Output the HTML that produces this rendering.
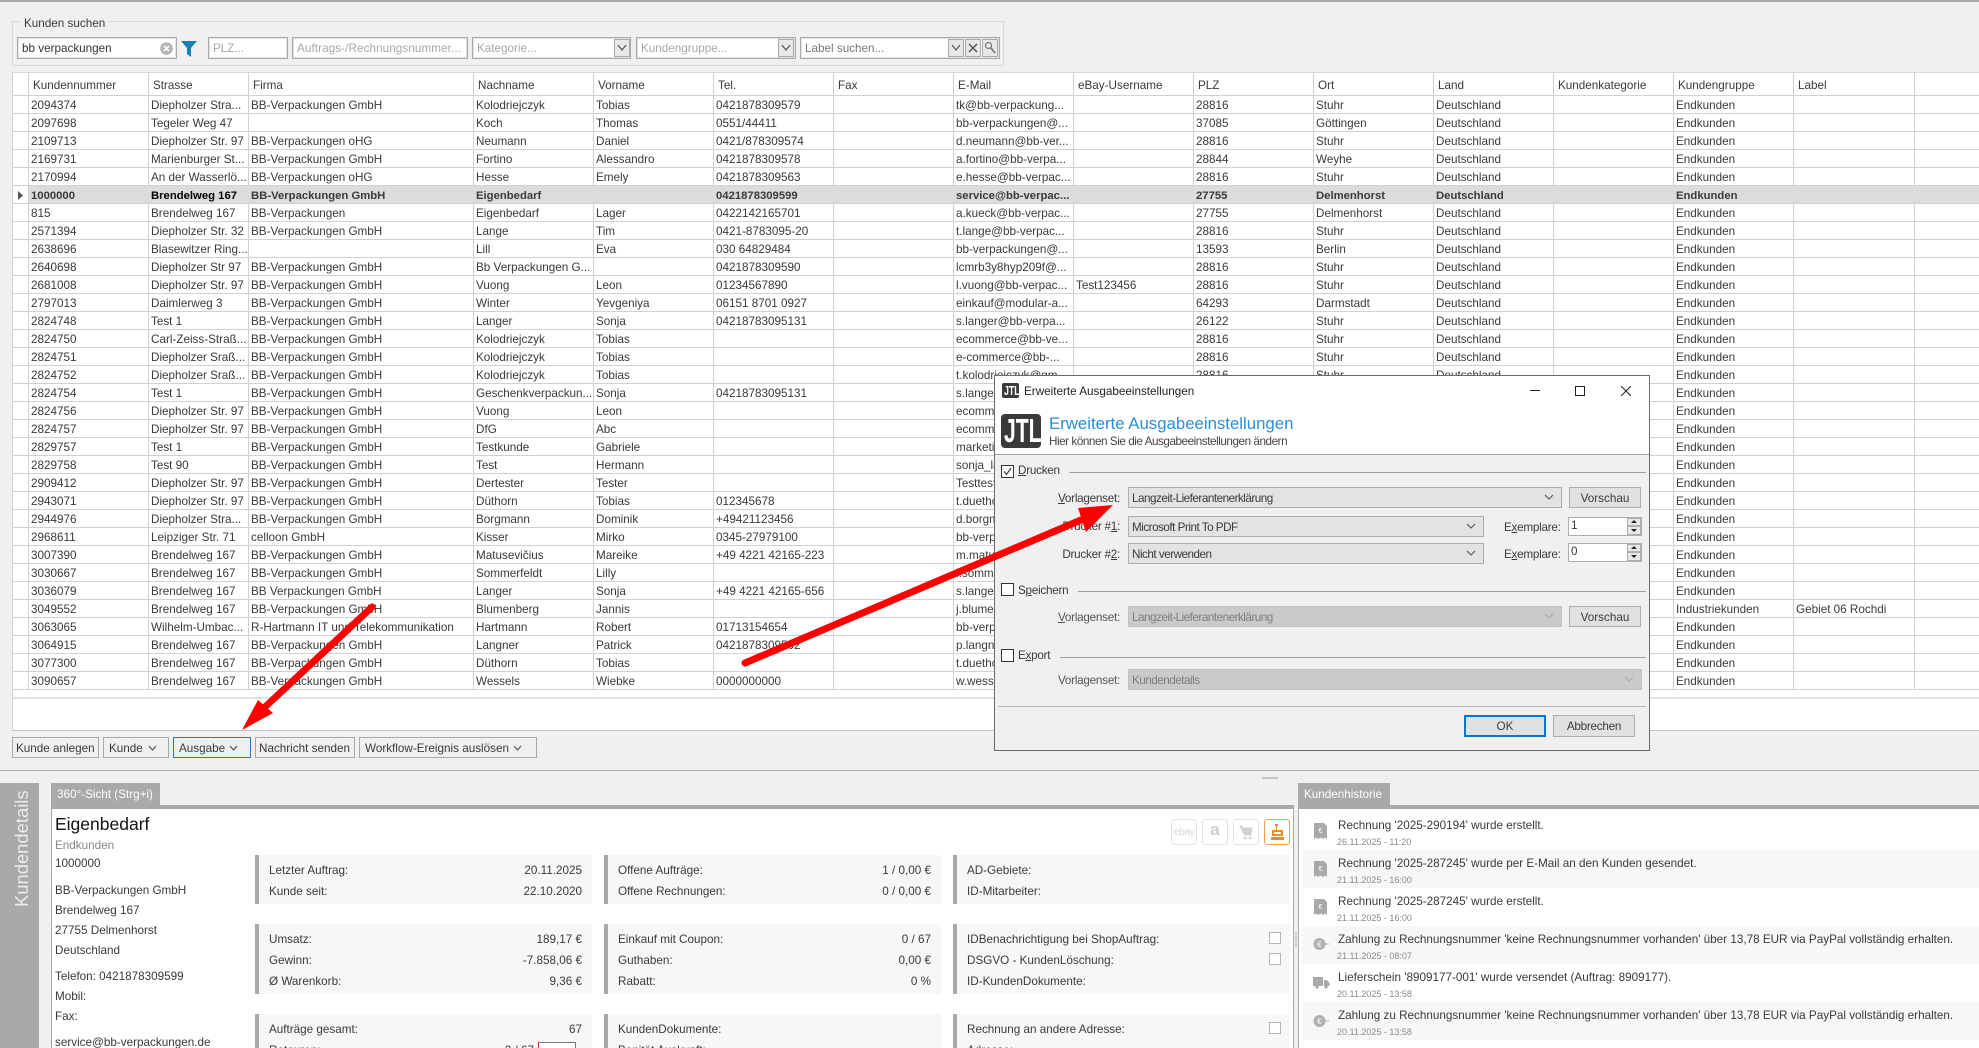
<!DOCTYPE html>
<html lang="de"><head><meta charset="utf-8"><title>Kunden</title>
<style>
html,body{margin:0;padding:0}
html{width:1979px;height:1048px;overflow:hidden}
body{width:1979px;height:1048px;position:relative;overflow:hidden;background:#f0f0f0;font:11.7px/18px "Liberation Sans",sans-serif;color:#3a3a3a}
.a{position:absolute;box-sizing:border-box}
.t{position:absolute;white-space:nowrap;line-height:18px}
.in{position:absolute;box-sizing:border-box;background:#fff;border:1px solid #a9a9a9;box-shadow:inset 0 0 0 1px #e4e4e4;height:22px;top:37px;color:#a8a8a8;line-height:21px;padding-left:4px;white-space:nowrap;overflow:hidden}
.mb{position:absolute;box-sizing:border-box;border:1px solid #a9a9a9;background:#e8e8e8;width:16px;height:18px;top:39px}
#g{position:absolute;left:13px;top:72px;width:1966px;table-layout:fixed;border-collapse:separate;border-spacing:0;background:#fff;font-size:11.7px}
#g td{height:18px;box-sizing:border-box;padding:3px 0 0 2px;border-right:1px solid #cdd2d9;border-bottom:1px solid #cdd2d9;white-space:nowrap;overflow:hidden;line-height:14px}
#g tr.h td{height:24px;padding-left:4px;border-top:1px solid #d9d9d9;border-bottom:1px solid #cdd2d9;padding-top:4px;line-height:16px}
#g tr.s td{background:#dcdcdc;font-weight:bold;font-size:11.3px;border-right-color:#dcdcdc}
#g tr.s td:first-child{background:#fff;border-right-color:#cdd2d9}
#g td:last-child{border-right:0}
.btn{position:absolute;box-sizing:border-box;top:737px;height:21px;background:#f0f0f0;border:1px solid #a9a9a9;line-height:21px;padding-left:3px;white-space:nowrap}
.card{position:absolute;box-sizing:border-box;background:#f7f7f7;border-left:4px solid #a9a9a9}
.r{position:absolute;white-space:nowrap;line-height:18px;text-align:right}
.cb{position:absolute;box-sizing:border-box;width:12px;height:12px;background:#fff;border:1px solid #b5b5b5}
.ib{position:absolute;box-sizing:border-box;top:819px;width:26px;height:26px;background:#fff;border:1px solid #e2e2e2;border-radius:3px}
.hi{position:absolute;left:1302px;right:0;height:38px}
.d{font-size:9px;color:#8a8a8a}
.c{position:absolute;box-sizing:border-box;background:#e3e3e3;border:1px solid #acacac;height:21px;line-height:21px;padding-left:3px;white-space:nowrap;left:1128px;letter-spacing:-.5px}
.c.dis{background:#cacaca;border-color:#c0c0c0;color:#7d7d7d}
.c svg{position:absolute;right:7px;top:6px}
.vb{position:absolute;box-sizing:border-box;background:#e1e1e1;border:1px solid #adadad;left:1569px;width:72px;height:21px;text-align:center;line-height:21px}
.dcb{position:absolute;box-sizing:border-box;left:1001px;width:13px;height:13px;background:#fff;border:1px solid #333}
.ln{position:absolute;height:1px;background:#a0a0a0;right:333px}
.sp{position:absolute;box-sizing:border-box;left:1568px;width:74px;height:19px;background:#fff;border:1px solid #abadb3;padding-left:2px;line-height:15px}
.sb{position:absolute;box-sizing:border-box;right:0;width:14px;height:8px;background:#e8e8e8;border:1px solid #adadad}
.dl{letter-spacing:-.25px}
</style></head><body>

<div class="a" style="left:0;top:0;width:1979px;height:2px;background:#a9a9a9"></div>

<!-- search group -->
<div class="a" style="left:12px;top:21px;width:992px;height:45px;border:1px solid #d9d9d9"></div>
<div class="t" style="left:20px;top:15px;padding:0 4px;background:#f0f0f0;font-size:11.7px">Kunden suchen</div>
<div class="in" style="left:17px;width:160px;color:#333">bb verpackungen</div>
<svg class="a" style="left:160px;top:42px" width="13" height="13" viewBox="0 0 13 13"><circle cx="6.5" cy="6.5" r="6.3" fill="#b4b4b4"/><path d="M4 4l5 5M9 4l-5 5" stroke="#fff" stroke-width="1.6"/></svg>
<svg class="a" style="left:181px;top:41px" width="16" height="16" viewBox="0 0 16 16"><path d="M0 0H16L10 7V16L6 13V7Z" fill="#1d7fb4"/></svg>
<div class="in" style="left:208px;width:80px">PLZ...</div>
<div class="in" style="left:292px;width:176px;letter-spacing:.08px">Auftrags-/Rechnungsnummer...</div>
<div class="in" style="left:472px;width:159px">Kategorie...</div>
<div class="mb" style="left:614px"><svg width="14" height="16"><path d="M3 5l4 5 4-5" fill="none" stroke="#555" stroke-width="1.2"/></svg></div>
<div class="in" style="left:636px;width:160px">Kundengruppe...</div>
<div class="mb" style="left:778px"><svg width="14" height="16"><path d="M3 5l4 5 4-5" fill="none" stroke="#555" stroke-width="1.2"/></svg></div>
<div class="in" style="left:800px;width:200px;color:#777">Label suchen...</div>
<div class="mb" style="left:948px"><svg width="14" height="16"><path d="M3 5l4 5 4-5" fill="none" stroke="#555" stroke-width="1.2"/></svg></div>
<div class="mb" style="left:965px"><svg width="14" height="16"><path d="M3 4l8 8M11 4l-8 8" fill="none" stroke="#555" stroke-width="1.4"/></svg></div>
<div class="mb" style="left:982px"><svg width="14" height="16"><circle cx="5.5" cy="5.5" r="3" fill="none" stroke="#777" stroke-width="1.2"/><path d="M8 8l4 5" stroke="#777" stroke-width="1.8"/></svg></div>

<!-- grid -->
<div class="a" style="left:12px;top:72px;width:1967px;height:659px;background:#fff;border-left:1px solid #d0d0d0;border-bottom:1px solid #c4c4c4"></div>
<table id="g">
<colgroup><col style="width:16px"><col style="width:120px"><col style="width:100px"><col style="width:225px"><col style="width:120px"><col style="width:120px"><col style="width:120px"><col style="width:120px"><col style="width:120px"><col style="width:120px"><col style="width:120px"><col style="width:120px"><col style="width:120px"><col style="width:120px"><col style="width:120px"><col style="width:121px"><col style="width:64px"></colgroup>
<tr class="h"><td></td><td>Kundennummer</td><td>Strasse</td><td>Firma</td><td>Nachname</td><td>Vorname</td><td>Tel.</td><td>Fax</td><td>E-Mail</td><td>eBay-Username</td><td>PLZ</td><td>Ort</td><td>Land</td><td>Kundenkategorie</td><td>Kundengruppe</td><td>Label</td><td></td></tr>
<tr><td></td><td>2094374</td><td>Diepholzer Stra...</td><td>BB-Verpackungen GmbH</td><td>Kolodriejczyk</td><td>Tobias</td><td>0421878309579</td><td></td><td>tk@bb-verpackung...</td><td></td><td>28816</td><td>Stuhr</td><td>Deutschland</td><td></td><td>Endkunden</td><td></td><td></td></tr>
<tr><td></td><td>2097698</td><td>Tegeler Weg 47</td><td></td><td>Koch</td><td>Thomas</td><td>0551/44411</td><td></td><td>bb-verpackungen@...</td><td></td><td>37085</td><td>Göttingen</td><td>Deutschland</td><td></td><td>Endkunden</td><td></td><td></td></tr>
<tr><td></td><td>2109713</td><td>Diepholzer Str. 97</td><td>BB-Verpackungen oHG</td><td>Neumann</td><td>Daniel</td><td>0421/878309574</td><td></td><td>d.neumann@bb-ver...</td><td></td><td>28816</td><td>Stuhr</td><td>Deutschland</td><td></td><td>Endkunden</td><td></td><td></td></tr>
<tr><td></td><td>2169731</td><td>Marienburger St...</td><td>BB-Verpackungen GmbH</td><td>Fortino</td><td>Alessandro</td><td>0421878309578</td><td></td><td>a.fortino@bb-verpa...</td><td></td><td>28844</td><td>Weyhe</td><td>Deutschland</td><td></td><td>Endkunden</td><td></td><td></td></tr>
<tr><td></td><td>2170994</td><td>An der Wasserlö...</td><td>BB-Verpackungen oHG</td><td>Hesse</td><td>Emely</td><td>0421878309563</td><td></td><td>e.hesse@bb-verpac...</td><td></td><td>28816</td><td>Stuhr</td><td>Deutschland</td><td></td><td>Endkunden</td><td></td><td></td></tr>
<tr class="s"><td></td><td>1000000</td><td style="color:#000">Brendelweg 167</td><td>BB-Verpackungen GmbH</td><td>Eigenbedarf</td><td></td><td>0421878309599</td><td></td><td>service@bb-verpac...</td><td></td><td>27755</td><td>Delmenhorst</td><td>Deutschland</td><td></td><td>Endkunden</td><td></td><td></td></tr>
<tr><td></td><td>815</td><td>Brendelweg 167</td><td>BB-Verpackungen</td><td>Eigenbedarf</td><td>Lager</td><td>0422142165701</td><td></td><td>a.kueck@bb-verpac...</td><td></td><td>27755</td><td>Delmenhorst</td><td>Deutschland</td><td></td><td>Endkunden</td><td></td><td></td></tr>
<tr><td></td><td>2571394</td><td>Diepholzer Str. 32</td><td>BB-Verpackungen GmbH</td><td>Lange</td><td>Tim</td><td>0421-8783095-20</td><td></td><td>t.lange@bb-verpac...</td><td></td><td>28816</td><td>Stuhr</td><td>Deutschland</td><td></td><td>Endkunden</td><td></td><td></td></tr>
<tr><td></td><td>2638696</td><td>Blasewitzer Ring...</td><td></td><td>Lill</td><td>Eva</td><td>030 64829484</td><td></td><td>bb-verpackungen@...</td><td></td><td>13593</td><td>Berlin</td><td>Deutschland</td><td></td><td>Endkunden</td><td></td><td></td></tr>
<tr><td></td><td>2640698</td><td>Diepholzer Str 97</td><td>BB-Verpackungen GmbH</td><td>Bb Verpackungen G...</td><td></td><td>0421878309590</td><td></td><td>lcmrb3y8hyp209f@...</td><td></td><td>28816</td><td>Stuhr</td><td>Deutschland</td><td></td><td>Endkunden</td><td></td><td></td></tr>
<tr><td></td><td>2681008</td><td>Diepholzer Str. 97</td><td>BB-Verpackungen GmbH</td><td>Vuong</td><td>Leon</td><td>01234567890</td><td></td><td>l.vuong@bb-verpac...</td><td>Test123456</td><td>28816</td><td>Stuhr</td><td>Deutschland</td><td></td><td>Endkunden</td><td></td><td></td></tr>
<tr><td></td><td>2797013</td><td>Daimlerweg 3</td><td>BB-Verpackungen GmbH</td><td>Winter</td><td>Yevgeniya</td><td>06151 8701 0927</td><td></td><td>einkauf@modular-a...</td><td></td><td>64293</td><td>Darmstadt</td><td>Deutschland</td><td></td><td>Endkunden</td><td></td><td></td></tr>
<tr><td></td><td>2824748</td><td>Test 1</td><td>BB-Verpackungen GmbH</td><td>Langer</td><td>Sonja</td><td>04218783095131</td><td></td><td>s.langer@bb-verpa...</td><td></td><td>26122</td><td>Stuhr</td><td>Deutschland</td><td></td><td>Endkunden</td><td></td><td></td></tr>
<tr><td></td><td>2824750</td><td>Carl-Zeiss-Straß...</td><td>BB-Verpackungen GmbH</td><td>Kolodriejczyk</td><td>Tobias</td><td></td><td></td><td>ecommerce@bb-ve...</td><td></td><td>28816</td><td>Stuhr</td><td>Deutschland</td><td></td><td>Endkunden</td><td></td><td></td></tr>
<tr><td></td><td>2824751</td><td>Diepholzer Sraß...</td><td>BB-Verpackungen GmbH</td><td>Kolodriejczyk</td><td>Tobias</td><td></td><td></td><td>e-commerce@bb-...</td><td></td><td>28816</td><td>Stuhr</td><td>Deutschland</td><td></td><td>Endkunden</td><td></td><td></td></tr>
<tr><td></td><td>2824752</td><td>Diepholzer Sraß...</td><td>BB-Verpackungen GmbH</td><td>Kolodriejczyk</td><td>Tobias</td><td></td><td></td><td>t.kolodriejczyk@gm...</td><td></td><td>28816</td><td>Stuhr</td><td>Deutschland</td><td></td><td>Endkunden</td><td></td><td></td></tr>
<tr><td></td><td>2824754</td><td>Test 1</td><td>BB-Verpackungen GmbH</td><td>Geschenkverpackun...</td><td>Sonja</td><td>04218783095131</td><td></td><td>s.langer@bb-verpa...</td><td></td><td>28816</td><td>Stuhr</td><td>Deutschland</td><td></td><td>Endkunden</td><td></td><td></td></tr>
<tr><td></td><td>2824756</td><td>Diepholzer Str. 97</td><td>BB-Verpackungen GmbH</td><td>Vuong</td><td>Leon</td><td></td><td></td><td>ecommerce@bb-ve...</td><td></td><td>28816</td><td>Stuhr</td><td>Deutschland</td><td></td><td>Endkunden</td><td></td><td></td></tr>
<tr><td></td><td>2824757</td><td>Diepholzer Str. 97</td><td>BB-Verpackungen GmbH</td><td>DfG</td><td>Abc</td><td></td><td></td><td>ecommerce@bb-ve...</td><td></td><td>28816</td><td>Stuhr</td><td>Deutschland</td><td></td><td>Endkunden</td><td></td><td></td></tr>
<tr><td></td><td>2829757</td><td>Test 1</td><td>BB-Verpackungen GmbH</td><td>Testkunde</td><td>Gabriele</td><td></td><td></td><td>marketing@bb-ve...</td><td></td><td>28816</td><td>Stuhr</td><td>Deutschland</td><td></td><td>Endkunden</td><td></td><td></td></tr>
<tr><td></td><td>2829758</td><td>Test 90</td><td>BB-Verpackungen GmbH</td><td>Test</td><td>Hermann</td><td></td><td></td><td>sonja_langer@bb...</td><td></td><td>28816</td><td>Stuhr</td><td>Deutschland</td><td></td><td>Endkunden</td><td></td><td></td></tr>
<tr><td></td><td>2909412</td><td>Diepholzer Str. 97</td><td>BB-Verpackungen GmbH</td><td>Dertester</td><td>Tester</td><td></td><td></td><td>Testtester@bb-ve...</td><td></td><td>28816</td><td>Stuhr</td><td>Deutschland</td><td></td><td>Endkunden</td><td></td><td></td></tr>
<tr><td></td><td>2943071</td><td>Diepholzer Str. 97</td><td>BB-Verpackungen GmbH</td><td>Düthorn</td><td>Tobias</td><td>012345678</td><td></td><td>t.duethorn@bb-ve...</td><td></td><td>28816</td><td>Stuhr</td><td>Deutschland</td><td></td><td>Endkunden</td><td></td><td></td></tr>
<tr><td></td><td>2944976</td><td>Diepholzer Stra...</td><td>BB-Verpackungen GmbH</td><td>Borgmann</td><td>Dominik</td><td>+49421123456</td><td></td><td>d.borgmann@bb-...</td><td></td><td>28816</td><td>Stuhr</td><td>Deutschland</td><td></td><td>Endkunden</td><td></td><td></td></tr>
<tr><td></td><td>2968611</td><td>Leipziger Str. 71</td><td>celloon GmbH</td><td>Kisser</td><td>Mirko</td><td>0345-27979100</td><td></td><td>bb-verpackungen@...</td><td></td><td>28816</td><td>Stuhr</td><td>Deutschland</td><td></td><td>Endkunden</td><td></td><td></td></tr>
<tr><td></td><td>3007390</td><td>Brendelweg 167</td><td>BB-Verpackungen GmbH</td><td>Matusevičius</td><td>Mareike</td><td>+49 4221 42165-223</td><td></td><td>m.matusevicius@...</td><td></td><td>27755</td><td>Delmenhorst</td><td>Deutschland</td><td></td><td>Endkunden</td><td></td><td></td></tr>
<tr><td></td><td>3030667</td><td>Brendelweg 167</td><td>BB-Verpackungen GmbH</td><td>Sommerfeldt</td><td>Lilly</td><td></td><td></td><td>l.sommerfeldt@bb...</td><td></td><td>27755</td><td>Delmenhorst</td><td>Deutschland</td><td></td><td>Endkunden</td><td></td><td></td></tr>
<tr><td></td><td>3036079</td><td>Brendelweg 167</td><td>BB Verpackungen GmbH</td><td>Langer</td><td>Sonja</td><td>+49 4221 42165-656</td><td></td><td>s.langer@bb-verpa...</td><td></td><td>27755</td><td>Delmenhorst</td><td>Deutschland</td><td></td><td>Endkunden</td><td></td><td></td></tr>
<tr><td></td><td>3049552</td><td>Brendelweg 167</td><td>BB-Verpackungen GmbH</td><td>Blumenberg</td><td>Jannis</td><td></td><td></td><td>j.blumenberg@bb...</td><td></td><td>27755</td><td>Delmenhorst</td><td>Deutschland</td><td></td><td>Industriekunden</td><td>Gebiet 06 Rochdi</td><td></td></tr>
<tr><td></td><td>3063065</td><td>Wilhelm-Umbac...</td><td>R-Hartmann IT und Telekommunikation</td><td>Hartmann</td><td>Robert</td><td>01713154654</td><td></td><td>bb-verpackungen@...</td><td></td><td>27755</td><td>Delmenhorst</td><td>Deutschland</td><td></td><td>Endkunden</td><td></td><td></td></tr>
<tr><td></td><td>3064915</td><td>Brendelweg 167</td><td>BB-Verpackungen GmbH</td><td>Langner</td><td>Patrick</td><td>0421878309502</td><td></td><td>p.langner@bb-ve...</td><td></td><td>27755</td><td>Delmenhorst</td><td>Deutschland</td><td></td><td>Endkunden</td><td></td><td></td></tr>
<tr><td></td><td>3077300</td><td>Brendelweg 167</td><td>BB-Verpackungen GmbH</td><td>Düthorn</td><td>Tobias</td><td></td><td></td><td>t.duethorn@bb-ve...</td><td></td><td>27755</td><td>Delmenhorst</td><td>Deutschland</td><td></td><td>Endkunden</td><td></td><td></td></tr>
<tr><td></td><td>3090657</td><td>Brendelweg 167</td><td>BB-Verpackungen GmbH</td><td>Wessels</td><td>Wiebke</td><td>0000000000</td><td></td><td>w.wessels@bb-ve...</td><td></td><td>27755</td><td>Delmenhorst</td><td>Deutschland</td><td></td><td>Endkunden</td><td></td><td></td></tr>
</table>
<svg class="a" style="left:18px;top:191px" width="6" height="9"><path d="M0 0L5 4.5L0 9Z" fill="#555"/></svg>
<div class="a" style="left:13px;top:697px;width:1966px;height:2px;background:#e2e2e2"></div>

<!-- action buttons -->
<div class="btn" style="left:12px;width:87px">Kunde anlegen</div>
<div class="btn" style="left:103px;width:66px;padding-left:5px">Kunde <svg width="10" height="8" style="margin-left:2px"><path d="M1 2l3.5 4L8 2" fill="none" stroke="#555" stroke-width="1.2"/></svg></div>
<div class="btn" style="left:173px;width:78px;padding-left:5px;border-color:#2a78bd">Ausgabe <svg width="10" height="8" style="margin-left:1px"><path d="M1 2l3.5 4L8 2" fill="none" stroke="#555" stroke-width="1.2"/></svg></div>
<div class="btn" style="left:255px;width:100px">Nachricht senden</div>
<div class="btn" style="left:359px;width:178px;padding-left:5px">Workflow-Ereignis auslösen <svg width="10" height="8" style="margin-left:1px"><path d="M1 2l3.5 4L8 2" fill="none" stroke="#555" stroke-width="1.2"/></svg></div>

<div class="a" style="left:0;top:770px;width:1979px;height:1px;background:#a9a9a9"></div>
<div class="a" style="left:1262px;top:777px;width:16px;height:2px;background:#c4c4c4"></div>

<!-- Kundendetails side -->
<div class="a" style="left:0;top:783px;width:39px;height:265px;background:#a9a9a9"></div>
<div class="t" style="left:22px;top:907px;font-size:18.4px;line-height:20px;color:#ececec;transform-origin:0 0;transform:rotate(-90deg) translateY(-10px)">Kundendetails</div>

<!-- 360 panel -->
<div class="a" style="left:51px;top:809px;width:1243px;height:239px;background:#fff;border-left:1px solid #a9a9a9;border-right:1px solid #a9a9a9"></div>
<div class="a" style="left:51px;top:783px;width:109px;height:22px;background:#a9a9a9;color:#fff;line-height:23px;padding-left:6px;white-space:nowrap">360°-Sicht (Strg+i)</div>
<div class="a" style="left:51px;top:805px;width:1243px;height:4px;background:#a9a9a9"></div>

<div class="t" style="left:55px;top:812px;font-size:17.5px;line-height:24px;color:#111">Eigenbedarf</div>
<div class="t" style="left:55px;top:837px;color:#888">Endkunden</div>
<div class="t" style="left:55px;top:855px">1000000</div>
<div class="t" style="left:55px;top:882px">BB-Verpackungen GmbH</div>
<div class="t" style="left:55px;top:902px">Brendelweg 167</div>
<div class="t" style="left:55px;top:922px">27755 Delmenhorst</div>
<div class="t" style="left:55px;top:942px">Deutschland</div>
<div class="t" style="left:55px;top:968px">Telefon: 0421878309599</div>
<div class="t" style="left:55px;top:988px">Mobil:</div>
<div class="t" style="left:55px;top:1008px">Fax:</div>
<div class="t" style="left:55px;top:1034px">service@bb-verpackungen.de</div>

<!-- col 1 -->
<div class="card" style="left:255px;top:855px;width:337px;height:49px"></div>
<div class="card" style="left:255px;top:924px;width:337px;height:70px"></div>
<div class="card" style="left:255px;top:1014px;width:337px;height:34px"></div>
<div class="t" style="left:269px;top:862px">Letzter Auftrag:</div><div class="r" style="right:1397px;top:862px">20.11.2025</div>
<div class="t" style="left:269px;top:883px">Kunde seit:</div><div class="r" style="right:1397px;top:883px">22.10.2020</div>
<div class="t" style="left:269px;top:931px">Umsatz:</div><div class="r" style="right:1397px;top:931px">189,17 €</div>
<div class="t" style="left:269px;top:952px">Gewinn:</div><div class="r" style="right:1397px;top:952px">-7.858,06 €</div>
<div class="t" style="left:269px;top:973px">Ø Warenkorb:</div><div class="r" style="right:1397px;top:973px">9,36 €</div>
<div class="t" style="left:269px;top:1021px">Aufträge gesamt:</div><div class="r" style="right:1397px;top:1021px">67</div>
<div class="t" style="left:269px;top:1042px">Retouren:</div><div class="r" style="right:1445px;top:1042px">3 / 67</div>
<div class="a" style="left:538px;top:1042px;width:38px;height:10px;background:#fff;border:1px solid #777;border-left:1px solid #c33"></div>

<!-- col 2 -->
<div class="card" style="left:604px;top:855px;width:337px;height:49px"></div>
<div class="card" style="left:604px;top:924px;width:337px;height:70px"></div>
<div class="card" style="left:604px;top:1014px;width:337px;height:34px"></div>
<div class="t" style="left:618px;top:862px">Offene Aufträge:</div><div class="r" style="right:1048px;top:862px">1 / 0,00 €</div>
<div class="t" style="left:618px;top:883px">Offene Rechnungen:</div><div class="r" style="right:1048px;top:883px">0 / 0,00 €</div>
<div class="t" style="left:618px;top:931px">Einkauf mit Coupon:</div><div class="r" style="right:1048px;top:931px">0 / 67</div>
<div class="t" style="left:618px;top:952px">Guthaben:</div><div class="r" style="right:1048px;top:952px">0,00 €</div>
<div class="t" style="left:618px;top:973px">Rabatt:</div><div class="r" style="right:1048px;top:973px">0 %</div>
<div class="t" style="left:618px;top:1021px">KundenDokumente:</div>
<div class="t" style="left:618px;top:1042px">Bonität Auskunft:</div>

<!-- col 3 -->
<div class="card" style="left:953px;top:855px;width:337px;height:49px"></div>
<div class="card" style="left:953px;top:924px;width:337px;height:70px"></div>
<div class="card" style="left:953px;top:1014px;width:337px;height:34px"></div>
<div class="t" style="left:967px;top:862px">AD-Gebiete:</div>
<div class="t" style="left:967px;top:883px">ID-Mitarbeiter:</div>
<div class="t" style="left:967px;top:931px">IDBenachrichtigung bei ShopAuftrag:</div><div class="cb" style="left:1269px;top:932px"></div>
<div class="t" style="left:967px;top:952px">DSGVO - KundenLöschung:</div><div class="cb" style="left:1269px;top:953px"></div>
<div class="t" style="left:967px;top:973px">ID-KundenDokumente:</div>
<div class="t" style="left:967px;top:1021px">Rechnung an andere Adresse:</div><div class="cb" style="left:1269px;top:1022px"></div>
<div class="t" style="left:967px;top:1042px">Adresse:</div>

<!-- channel icons -->
<div class="ib" style="left:1171px;color:#d8d8d8;font-size:10.5px;line-height:24px;text-align:center;letter-spacing:-.6px">ebay</div>
<div class="ib" style="left:1202px;color:#cfcfcf;font:bold 17px/20px 'Liberation Sans',sans-serif;text-align:center">a</div>
<div class="ib" style="left:1233px"><svg width="24" height="24" viewBox="0 0 24 24"><path d="M6 6h2l1 2h9l-1 6H10zM10 15h7" fill="#d2d2d2" stroke="#d2d2d2"/><circle cx="11" cy="18" r="1.4" fill="#d2d2d2"/><circle cx="16" cy="18" r="1.4" fill="#d2d2d2"/></svg></div>
<div class="ib" style="left:1264px;border-color:#f5a04e"><svg width="24" height="24" viewBox="0 0 24 24"><path d="M6 17h13v3H6zM7 10h11v6H7zM10 4h3v2h-1v4h-1V6h-1z" fill="#f08a24"/><rect x="9" y="12" width="7" height="2" fill="#fff"/></svg></div>

<div class="a" style="left:1295px;top:932px;width:2px;height:15px;background:repeating-linear-gradient(#b5b5b5 0 1px,transparent 1px 2px)"></div>

<!-- History -->
<div class="a" style="left:1298px;top:809px;width:681px;height:239px;background:#fff;border-left:1px solid #a9a9a9"></div>
<div class="a" style="left:1298px;top:783px;width:92px;height:22px;background:#a9a9a9;color:#fff;line-height:23px;padding-left:6px;white-space:nowrap">Kundenhistorie</div>
<div class="a" style="left:1298px;top:805px;width:681px;height:4px;background:#a9a9a9"></div>
<div class="hi" style="top:850px;background:#f7f7f7"></div>
<div class="hi" style="top:926px;background:#f7f7f7"></div>
<div class="hi" style="top:1002px;background:#f7f7f7"></div>

<div class="t" style="left:1338px;top:817px">Rechnung '2025-290194' wurde erstellt.</div><div class="t d" style="left:1337px;top:833px">26.11.2025 - 11:20</div>
<div class="t" style="left:1338px;top:855px">Rechnung '2025-287245' wurde per E-Mail an den Kunden gesendet.</div><div class="t d" style="left:1337px;top:871px">21.11.2025 - 16:00</div>
<div class="t" style="left:1338px;top:893px">Rechnung '2025-287245' wurde erstellt.</div><div class="t d" style="left:1337px;top:909px">21.11.2025 - 16:00</div>
<div class="t" style="left:1338px;top:931px">Zahlung zu Rechnungsnummer 'keine Rechnungsnummer vorhanden' über 13,78 EUR via PayPal vollständig erhalten.</div><div class="t d" style="left:1337px;top:947px">21.11.2025 - 08:07</div>
<div class="t" style="left:1338px;top:969px">Lieferschein '8909177-001' wurde versendet (Auftrag: 8909177).</div><div class="t d" style="left:1337px;top:985px">20.11.2025 - 13:58</div>
<div class="t" style="left:1338px;top:1007px">Zahlung zu Rechnungsnummer 'keine Rechnungsnummer vorhanden' über 13,78 EUR via PayPal vollständig erhalten.</div><div class="t d" style="left:1337px;top:1023px">20.11.2025 - 13:58</div>

<svg class="a" style="left:1314px;top:823px" width="14" height="16" viewBox="0 0 14 16"><path d="M0 0H10L13 3V16L11 14.5 9 16 6.500 14.500 4 16 2 14.500 0 16Z" fill="#a9a9a9"/><text x="6.500" y="10" font-size="7" font-family="Liberation Sans" fill="#fff" text-anchor="middle">€</text></svg>
<svg class="a" style="left:1314px;top:861px" width="14" height="16" viewBox="0 0 14 16"><path d="M0 0H10L13 3V16L11 14.5 9 16 6.500 14.500 4 16 2 14.500 0 16Z" fill="#a9a9a9"/><text x="6.500" y="10" font-size="7" font-family="Liberation Sans" fill="#fff" text-anchor="middle">€</text></svg>
<svg class="a" style="left:1314px;top:899px" width="14" height="16" viewBox="0 0 14 16"><path d="M0 0H10L13 3V16L11 14.5 9 16 6.500 14.500 4 16 2 14.500 0 16Z" fill="#a9a9a9"/><text x="6.500" y="10" font-size="7" font-family="Liberation Sans" fill="#fff" text-anchor="middle">€</text></svg>
<svg class="a" style="left:1313px;top:937px" width="16" height="14" viewBox="0 0 16 14"><circle cx="6.500" cy="7" r="6" fill="#b0b0b0"/><text x="6.500" y="10" font-size="8" font-family="Liberation Sans" fill="#fff" text-anchor="middle">€</text><path d="M12 7h4" stroke="#b0b0b0"/></svg>
<svg class="a" style="left:1313px;top:976px" width="17" height="13" viewBox="0 0 17 13"><path d="M0 1H10V10H0zM11 4H14L16.500 7V10H11z" fill="#a9a9a9"/><circle cx="4" cy="11" r="1.600" fill="#a9a9a9"/><circle cx="13" cy="11" r="1.600" fill="#a9a9a9"/></svg>
<svg class="a" style="left:1313px;top:1014px" width="16" height="14" viewBox="0 0 16 14"><circle cx="6.500" cy="7" r="6" fill="#b0b0b0"/><text x="6.500" y="10" font-size="8" font-family="Liberation Sans" fill="#fff" text-anchor="middle">€</text><path d="M12 7h4" stroke="#b0b0b0"/></svg>

<!-- Dialog -->
<div class="a" style="left:994px;top:375px;width:656px;height:376px;background:#f0f0f0;border:1px solid #6a6a6a"></div>
<div class="a" style="left:995px;top:376px;width:654px;height:79px;background:#fff;border-bottom:1px solid #a0a0a0"></div>
<svg class="a" style="left:1002px;top:383px" width="17" height="15" viewBox="0 0 17 15"><rect width="17" height="15" rx="2" fill="#3c3c3c"/><text x="0" y="0" transform="translate(2 12) scale(.68 1)" font-size="13" font-weight="bold" font-family="Liberation Sans" fill="#fff">JTL</text></svg>
<div class="t" style="left:1024px;top:383px;color:#222">Erweiterte Ausgabeeinstellungen</div>
<div class="a" style="left:1530px;top:390px;width:10px;height:1px;background:#222"></div>
<div class="a" style="left:1575px;top:386px;width:10px;height:10px;border:1px solid #222"></div>
<svg class="a" style="left:1621px;top:386px" width="10" height="10"><path d="M0 0L10 10M10 0L0 10" stroke="#222" stroke-width="1"/></svg>

<svg class="a" style="left:1001px;top:414px" width="40" height="34" viewBox="0 0 40 34"><rect width="40" height="34" rx="4" fill="#3a3a3a"/><text transform="translate(3 28) scale(.64 1)" font-size="33" font-weight="bold" font-family="Liberation Sans" fill="#fff">JTL</text></svg>
<div class="t" style="left:1049px;top:414px;font-size:16.8px;line-height:20px;color:#2a8fd8">Erweiterte Ausgabeeinstellungen</div>
<div class="t" style="left:1049px;top:433px;color:#444;letter-spacing:-.45px">Hier können Sie die Ausgabeeinstellungen ändern</div>

<div class="dcb" style="top:465px"><svg width="11" height="11" style="display:block"><path d="M2 5.500l2.500 3L9 2" fill="none" stroke="#333" stroke-width="1.100"/></svg></div>
<div class="t dl" style="left:1018px;top:462px"><u>D</u>rucken</div>
<div class="ln" style="left:1069px;top:472px"></div>

<div class="r dl" style="right:859px;top:490px"><u>V</u>orlagenset:</div>
<div class="c" style="top:487px;width:434px">Langzeit-Lieferantenerklärung<svg width="10" height="7"><path d="M1 1l4 4 4-4" fill="none" stroke="#555" stroke-width="1.100"/></svg></div>
<div class="vb" style="top:487px">Vorschau</div>

<div class="r dl" style="right:859px;top:518px">Drucker #<u>1</u>:</div>
<div class="c" style="top:516px;width:356px">Microsoft Print To PDF<svg width="10" height="7"><path d="M1 1l4 4 4-4" fill="none" stroke="#555" stroke-width="1.100"/></svg></div>
<div class="t dl" style="left:1504px;top:519px">E<u>x</u>emplare:</div>
<div class="sp" style="top:517px">1<div class="sb" style="top:0"></div><div class="sb" style="top:8px;height:9px"></div></div>
<svg class="a" style="left:1630px;top:519px" width="8" height="15"><path d="M1 4L4 1L7 4ZM1 10L7 10L4 13Z" fill="#222"/></svg>

<div class="r dl" style="right:859px;top:546px">Drucker #<u>2</u>:</div>
<div class="c" style="top:543px;width:356px">Nicht verwenden<svg width="10" height="7"><path d="M1 1l4 4 4-4" fill="none" stroke="#555" stroke-width="1.100"/></svg></div>
<div class="t dl" style="left:1504px;top:546px">E<u>x</u>emplare:</div>
<div class="sp" style="top:543px">0<div class="sb" style="top:0"></div><div class="sb" style="top:8px;height:9px"></div></div>
<svg class="a" style="left:1630px;top:545px" width="8" height="15"><path d="M1 4L4 1L7 4ZM1 10L7 10L4 13Z" fill="#222"/></svg>

<div class="dcb" style="top:583px"></div>
<div class="t dl" style="left:1018px;top:582px">S<u>p</u>eichern</div>
<div class="ln" style="left:1078px;top:591px"></div>
<div class="r dl" style="right:859px;top:609px;color:#555"><u>V</u>orlagenset:</div>
<div class="c dis" style="top:606px;width:434px">Langzeit-Lieferantenerklärung<svg width="10" height="7"><path d="M1 1l4 4 4-4" fill="none" stroke="#aaa" stroke-width="1.100"/></svg></div>
<div class="vb" style="top:606px">Vorschau</div>

<div class="dcb" style="top:649px"></div>
<div class="t dl" style="left:1018px;top:647px">E<u>x</u>port</div>
<div class="ln" style="left:1060px;top:657px"></div>
<div class="r dl" style="right:859px;top:672px;color:#555">Vorlagenset:</div>
<div class="c dis" style="top:669px;width:514px">Kundendetails<svg width="10" height="7"><path d="M1 1l4 4 4-4" fill="none" stroke="#aaa" stroke-width="1.100"/></svg></div>

<div class="a" style="left:998px;top:706px;width:648px;height:1px;background:#b5b5b5"></div>
<div class="a" style="left:1464px;top:715px;width:82px;height:22px;background:#e1e1e1;border:2px solid #0078d7;text-align:center;line-height:20px">OK</div>
<div class="a dl" style="left:1553px;top:715px;width:82px;height:22px;background:#e1e1e1;border:1px solid #adadad;text-align:center;line-height:22px">Abbrechen</div>

<!-- Red arrows -->
<svg class="a" style="left:0;top:0;pointer-events:none" width="1979" height="1048" viewBox="0 0 1979 1048">
<path d="M372 607L265 707" stroke="#fe0000" stroke-width="7" stroke-linecap="round" fill="none"/>
<path d="M242 730L258 700L273 713Z" fill="#fe0000"/>
<path d="M745 663L1081 520" stroke="#fe0000" stroke-width="7" stroke-linecap="round" fill="none"/>
<path d="M1113 505L1078 508L1086 532Z" fill="#fe0000"/>
</svg>
</body></html>
